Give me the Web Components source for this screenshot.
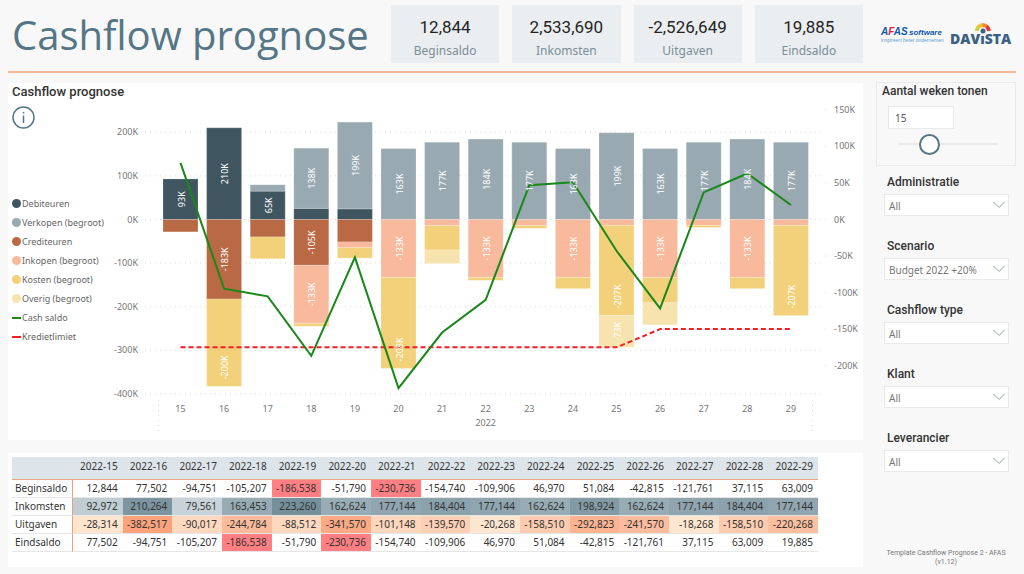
<!DOCTYPE html>
<html lang="nl">
<head>
<meta charset="utf-8">
<meta name="viewport" content="width=device-width, initial-scale=1">
<title>Cashflow prognose</title>
<style>
    body {
        margin: 0;
        background: #f8f8f8;
        color: #333;
        font-family: "Noto Sans", "Open Sans", sans-serif;
        --din: Roboto, "Liberation Sans", sans-serif;
        --teal: #547686;
        --peach: #fbb497;
    }
</style>
</head>
<body>
<cashflow-report></cashflow-report>

<script>
/*
*   Weekly figures behind the chart and the table, all amounts in euro.
*/
const WEEKS = [
    { week: 15, start: 12844, income: 92972, expense: -28314, end: 77502, up: { deb: 93 }, down: { cred: 28.3 } },
    { week: 16, start: 77502, income: 210264, expense: -382517, end: -94751, up: { deb: 210.3 }, down: { cred: 182.5, kosten: 200 } },
    { week: 17, start: -94751, income: 79561, expense: -90017, end: -105207, up: { deb: 65, verk: 14.6 }, down: { cred: 40, kosten: 50 } },
    { week: 18, start: -105207, income: 163453, expense: -244784, end: -186538, up: { deb: 25.5, verk: 138 }, down: { cred: 105, ink: 133, kosten: 6.8 } },
    { week: 19, start: -186538, income: 223260, expense: -88512, end: -51790, up: { deb: 24.3, verk: 199 }, down: { cred: 51.5, ink: 13, kosten: 24 } },
    { week: 20, start: -51790, income: 162624, expense: -341570, end: -230736, up: { verk: 162.6 }, down: { ink: 133, kosten: 208.4 } },
    { week: 21, start: -230736, income: 177144, expense: -101148, end: -154740, up: { verk: 177.1 }, down: { ink: 14, kosten: 56, overig: 31 } },
    { week: 22, start: -154740, income: 184404, expense: -139570, end: -109906, up: { verk: 184.4 }, down: { ink: 133, kosten: 6.5 } },
    { week: 23, start: -109906, income: 177144, expense: -20268, end: 46970, up: { verk: 177.1 }, down: { ink: 14, kosten: 6.3 } },
    { week: 24, start: 46970, income: 162624, expense: -158510, end: 51084, up: { verk: 162.6 }, down: { ink: 133, kosten: 25.5 } },
    { week: 25, start: 51084, income: 198924, expense: -292823, end: -42815, up: { verk: 198.9 }, down: { ink: 13.5, kosten: 206.5, overig: 73 } },
    { week: 26, start: -42815, income: 162624, expense: -241570, end: -121761, up: { verk: 162.6 }, down: { ink: 133, kosten: 58, overig: 50.5 } },
    { week: 27, start: -121761, income: 177144, expense: -18268, end: 37115, up: { verk: 177.1 }, down: { ink: 13.5, kosten: 4.8 } },
    { week: 28, start: 37115, income: 184404, expense: -158510, end: 63009, up: { verk: 184.4 }, down: { ink: 133, kosten: 25.5 } },
    { week: 29, start: 63009, income: 177144, expense: -220268, end: 19885, up: { verk: 177.1 }, down: { ink: 13.5, kosten: 206.8 } }
];

const SERIES = {
    deb: { name: "Debiteuren", color: "#3f5661" },
    verk: { name: "Verkopen (begroot)", color: "#98a9b2" },
    cred: { name: "Crediteuren", color: "#b96a44" },
    ink: { name: "Inkopen (begroot)", color: "#f9b99c" },
    kosten: { name: "Kosten (begroot)", color: "#f2d17a" },
    overig: { name: "Overig (begroot)", color: "#f7e3ae" },
    saldo: { name: "Cash saldo", color: "#1a871a", line: true },
    limiet: { name: "Kredietlimiet", color: "#f81d22", line: true }
};

class KpiCard extends HTMLElement {
    constructor() {
        super();
        this.attachShadow({ mode: "open" });

        this.shadowRoot.innerHTML = `
            <style>
                :host {
                    display: flex;
                    flex-direction: column;
                    align-items: center;
                    box-sizing: border-box;
                    height: 58px;
                    padding-top: 10px;
                    background: #eaeef1;
                }

                .value {
                    font: 400 17px/24px var(--din);
                    color: #252423;
                }

                .label {
                    font-size: 12px;
                    line-height: 24px;
                    color: #7b8d96;
                }
            </style>
            <div class="value"><slot></slot></div>
            <div class="label"><slot name="label"></slot></div>
        `;
    }
}

class PartnerLogos extends HTMLElement {
    constructor() {
        super();
        this.attachShadow({ mode: "open" });

        this.shadowRoot.innerHTML = `
            <style>
                :host {
                    display: flex;
                    gap: 7px;
                    padding: 15px 0 0 5px;
                }

                svg {
                    display: block;
                    overflow: visible;
                }
            </style>
            <svg width="62" height="30" viewBox="0 0 62 30" role="img" aria-label="AFAS software">
                <g font-family="Liberation Sans, sans-serif" font-style="italic" font-weight="700">
                    <text x="0" y="15" font-size="10" fill="#0d5aa7">A<tspan fill="#e2203c">F</tspan>AS</text>
                    <text x="28" y="15" font-size="8" fill="#0d5aa7">software</text>
                </g>
                <text x="0" y="22" font-family="Liberation Sans, sans-serif" font-size="5" fill="#5fa0d0">inspireert beter ondernemen</text>
            </svg>
            <svg width="62" height="30" viewBox="0 0 62 30" role="img" aria-label="DAVISTA">
                <g fill="none" stroke-width="4">
                    <path d="M27 11A6 6 0 0 1 29 6.500" stroke="#c8d43a"/>
                    <path d="M28.500 7A6 6 0 0 1 33 5" stroke="#f2c230"/>
                    <path d="M32.500 5A6 6 0 0 1 37 7" stroke="#f08a2c"/>
                    <path d="M36.500 6.500A6 6 0 0 1 39 11" stroke="#dc4038"/>
                </g>
                <circle cx="33" cy="11" r="2.500" fill="#3c5f86"/>
                <text x="0" y="24" font-family="Open Sans, sans-serif" font-weight="800" font-size="14" fill="#3c5f86">DAVıSTA</text>
            </svg>
        `;
    }
}

class ChartLegend extends HTMLElement {
    constructor() {
        super();
        this.attachShadow({ mode: "open" });

        const items = Object.values(SERIES).map(({ name, color, line }) => `
            <li><span class="${line ? "dash" : "dot"}" style="background:${color}"></span>${name}</li>
        `).join("");

        this.shadowRoot.innerHTML = `
            <style>
                :host {
                    display: block;
                }

                ul {
                    margin: 0;
                    padding: 0;
                    list-style: none;
                    font-size: 9px;
                    line-height: 19px;
                    color: #666;
                }

                li {
                    display: flex;
                    align-items: center;
                    gap: 1px;
                    white-space: nowrap;
                }

                .dot {
                    width: 9px;
                    height: 9px;
                    border-radius: 50%;
                }

                .dash {
                    width: 9px;
                    height: 2px;
                }
            </style>
            <ul>${items}</ul>
        `;
    }
}

class CashflowChart extends HTMLElement {
    constructor() {
        super();
        this.attachShadow({ mode: "open" });

        this.shadowRoot.innerHTML = `
            <style>
                :host {
                    display: block;
                }

                svg {
                    display: block;
                    width: 100%;
                    height: auto;
                }

                text {
                    font-size: 9px;
                    fill: #777;
                }

                .bar-label {
                    fill: #fff;
                    text-anchor: middle;
                }

                .end {
                    text-anchor: end;
                }

                .middle {
                    text-anchor: middle;
                }

                .grid {
                    stroke: #d9d9d9;
                    stroke-dasharray: 1 4;
                }

                .bar {
                    stroke: #fff;
                    stroke-opacity: 0.2;
                }
            </style>
            <svg viewBox="0 0 751 340" role="img" aria-label="Cashflow prognose per week">${this.draw()}</svg>
        `;
    }

    // centre of the bar of the nth week
    x(index) {
        return 68.5 + index * 43.6;
    }

    // left axis, in thousands
    bar(value) {
        return 119.5 - value * 0.4362;
    }

    // right axis, in thousands
    line(value) {
        return 119.5 - value * 0.7307;
    }

    draw() {
        return this.axes() + WEEKS.map((w, i) => this.stack(w.up, i, 1) + this.stack(w.down, i, -1)).join("")
            + this.lines() + this.labels.join("");
    }

    axes() {
        let out = "";
        for (let v = 200; v >= -400; v -= 100) {
            const y = this.bar(v);
            out += `<line class="grid" x1="33" x2="711" y1="${y}" y2="${y}"/>`;
            out += `<text class="end" x="26" y="${y + 3}">${v}K</text>`;
        }
        for (let v = 150; v >= -200; v -= 50) {
            const y = this.line(v);
            out += `<line class="grid" x1="713" x2="714" y1="${y}" y2="${y}"/>`;
            out += `<text x="722" y="${y + 3}">${v}K</text>`;
        }
        WEEKS.forEach((w, i) => {
            out += `<text class="middle" x="${this.x(i)}" y="312">${w.week}</text>`;
        });
        out += `<text class="middle" x="${this.x(7)}" y="326">2022</text>`;
        out += `<line class="grid" x1="46.500" x2="46.500" y1="300" y2="331"/>`;
        out += `<line class="grid" x1="700.500" x2="700.500" y1="300" y2="331"/>`;
        return out;
    }

    stack(parts, index, sign) {
        this.labels = this.labels || [];
        let total = 0;
        let out = "";
        for (const [key, size] of Object.entries(parts)) {
            const from = this.bar(sign * total);
            total += size;
            const to = this.bar(sign * total);
            const x = this.x(index);
            out += `<rect class="bar" x="${x - 17.5}" y="${Math.min(from, to)}" width="35" height="${Math.abs(to - from)}" fill="${SERIES[key].color}"/>`;

            // segments that are too short get no label
            if (size > 60) {
                const y = key === "kosten" ? to - 19 : (from + to) / 2;
                const text = (sign < 0 ? "-" : "") + Math.round(size) + "K";
                this.labels.push(`<text class="bar-label" transform="translate(${x + 4} ${y}) rotate(-90)">${text}</text>`);
            }
        }
        return out;
    }

    lines() {
        const saldo = WEEKS.map((w, i) => `${this.x(i)},${this.line(w.end / 1000)}`).join(" ");
        const limit = WEEKS.map((w, i) => `${this.x(i)},${this.line(w.week > 25 ? -150 : -175)}`).join(" ");
        return `
            <polyline points="${limit}" fill="none" stroke="${SERIES.limiet.color}" stroke-width="2" stroke-dasharray="5 3"/>
            <polyline points="${saldo}" fill="none" stroke="${SERIES.saldo.color}" stroke-width="2"/>
        `;
    }
}

class WeekTable extends HTMLElement {
    constructor() {
        super();
        this.attachShadow({ mode: "open" });

        const head = WEEKS.map(w => `<th scope="col">2022-${w.week}</th>`).join("");

        this.shadowRoot.innerHTML = `
            <style>
                :host {
                    display: block;
                    box-sizing: border-box;
                    padding: 4px 45px 15px 4px;
                    background: #fff;
                }

                table {
                    width: 100%;
                    table-layout: fixed;
                    border-collapse: separate;
                    border-spacing: 0;
                    font-size: 10px;
                    line-height: 17px;
                    color: #333;
                }

                th, td {
                    box-sizing: border-box;
                    padding: 0 5px 0 0;
                    font-weight: 400;
                    text-align: right;
                    white-space: nowrap;
                    border-bottom: 1px solid #e6e6e6;
                }

                thead th, thead td {
                    height: 23px;
                    padding-bottom: 4px;
                    background: #dee5ea;
                    border-bottom: 1px solid #e9a27e;
                }

                tr > :first-child {
                    width: 61px;
                    padding: 0 0 0 3px;
                    text-align: left;
                }

                tbody th {
                    border-right: 1px solid #e9a27e;
                }

                .low {
                    background: #ff7f83;
                }
            </style>
            <table>
                <thead><tr><td></td>${head}</tr></thead>
                <tbody>
                    ${this.row("Beginsaldo", "start", this.lowStyle)}
                    ${this.row("Inkomsten", "income", v => this.shade((v - 79561) / 143699, [200, 211, 217], [117, 143, 155]))}
                    ${this.row("Uitgaven", "expense", v => this.shade((-v - 18268) / 364249, [255, 230, 208], [250, 162, 124]))}
                    ${this.row("Eindsaldo", "end", this.lowStyle)}
                </tbody>
            </table>
        `;
    }

    row(name, key, style) {
        const cells = WEEKS.map(w => `<td ${style(w[key])}>${w[key].toLocaleString("en-US")}</td>`).join("");
        return `<tr><th scope="row">${name}</th>${cells}</tr>`;
    }

    // below the credit limit
    lowStyle(value) {
        return value < -175000 ? 'class="low"' : "";
    }

    shade(part, from, to) {
        const rgb = from.map((c, i) => Math.round(c + (to[i] - c) * part));
        return `style="background:rgb(${rgb})"`;
    }
}

class WeekSlider extends HTMLElement {
    constructor() {
        super();
        this.attachShadow({ mode: "open" });

        this.shadowRoot.innerHTML = `
            <style>
                :host {
                    display: flex;
                    flex-direction: column;
                    align-items: flex-start;
                    box-sizing: border-box;
                    height: 84px;
                    padding: 0 18px 0 5px;
                    border: 1px solid #e9e9e9;
                }

                label {
                    font: 500 12px/16px var(--din);
                    white-space: nowrap;
                }

                .number {
                    box-sizing: border-box;
                    width: 66px;
                    height: 23px;
                    margin: 7px 0 4px 6px;
                    padding: 0 6px;
                    border: 1px solid #e9e9e9;
                    background: #fff;
                    font: 10px/20px "Noto Sans", sans-serif;
                    color: #555;
                }

                .range {
                    appearance: none;
                    align-self: stretch;
                    height: 22px;
                    margin: 0 0 0 16px;
                    background: linear-gradient(#e9e9e9, #e9e9e9) center / 100% 2px no-repeat;
                }

                .range::-webkit-slider-thumb {
                    appearance: none;
                    box-sizing: border-box;
                    width: 21px;
                    height: 21px;
                    border: 2px solid var(--teal);
                    border-radius: 50%;
                    background: #fff;
                }
            </style>
            <label for="weeks">Aantal weken tonen</label>
            <input class="number" id="weeks" type="text" inputmode="numeric" value="15">
            <input class="range" type="range" min="1" max="53" value="15" aria-label="Aantal weken tonen">
        `;

        const [number, range] = this.shadowRoot.querySelectorAll("input");
        range.addEventListener("input", () => number.value = range.value);
        number.addEventListener("change", () => range.value = number.value);
    }
}

class FilterSelect extends HTMLElement {
    constructor() {
        super();
        this.attachShadow({ mode: "open" });

        this.shadowRoot.innerHTML = `
            <style>
                :host {
                    display: block;
                    padding: 0 7px 0 8px;
                }

                label {
                    display: block;
                    padding: 0 0 2px 3px;
                    font: 500 12px/20px var(--din);
                }

                .box {
                    display: grid;
                    align-items: center;
                    border: 1px solid #e9e9e9;
                    background: #fff;
                }

                .box > * {
                    grid-area: 1 / 1;
                }

                select {
                    appearance: none;
                    width: 100%;
                    height: 20px;
                    padding: 1px 20px 0 4px;
                    border: 0;
                    background: none;
                    font: 10px/16px "Noto Sans", sans-serif;
                    color: #777;
                }

                svg {
                    justify-self: end;
                    margin-right: 3px;
                    pointer-events: none;
                }
            </style>
            <label for="choice">${this.getAttribute("label")}</label>
            <div class="box">
                <select id="choice"><option>${this.getAttribute("value")}</option></select>
                <svg width="12" height="8" viewBox="0 0 12 8" fill="none" stroke="#8d9fa5"><path d="M.5 1l5.500 5.500L11.500 1"/></svg>
            </div>
        `;
    }
}

class CashflowReport extends HTMLElement {
    constructor() {
        super();
        this.attachShadow({ mode: "open" });

        this.shadowRoot.innerHTML = `
            <style>
                :host {
                    display: block;
                }

                .page {
                    display: flex;
                    flex-direction: column;
                    box-sizing: border-box;
                    min-height: 100vh;
                    padding: 5px 8px 7px;
                }

                .columns {
                    display: grid;
                    grid-template-columns: minmax(0, 1fr) 140px;
                    column-gap: 13px;
                }

                header {
                    height: 66px;
                    border-bottom: 2px solid var(--peach);
                }

                .banner {
                    display: flex;
                }

                h1 {
                    flex: 0 0 379px;
                    margin: 0;
                    padding-left: 4px;
                    font: 400 40px/60px "Open Sans", "Noto Sans", sans-serif;
                    color: var(--teal);
                    white-space: nowrap;
                }

                .kpis {
                    flex: 1;
                    display: grid;
                    grid-template-columns: repeat(4, 1fr);
                    gap: 13px;
                }

                .body {
                    flex: 1;
                    padding-top: 9px;
                }

                main {
                    display: flex;
                    flex-direction: column;
                    gap: 13px;
                    padding-top: 1px;
                }

                .chart {
                    display: grid;
                    grid-template-columns: 100px minmax(0, 1fr);
                    grid-template-rows: 17px auto;
                    padding-left: 4px;
                    background: #fff;
                }

                h2 {
                    grid-column: 1 / 3;
                    margin: 0;
                    font: 500 13px/17px var(--din);
                }

                .info, chart-legend {
                    grid-area: 2 / 1;
                }

                .info {
                    width: 23px;
                    height: 23px;
                    margin-top: 6px;
                    padding: 0;
                    border: 0;
                    background: none;
                }

                .info svg {
                    display: block;
                }

                chart-legend {
                    align-self: center;
                    justify-self: start;
                }

                aside {
                    display: flex;
                    flex-direction: column;
                }

                .filters {
                    display: flex;
                    flex-direction: column;
                    gap: 20px;
                    padding-top: 6px;
                }

                footer {
                    margin-top: auto;
                    font: 7px/9px var(--din);
                    color: #777;
                    text-align: center;
                }
            </style>
            <div class="page">
                <header class="columns">
                    <div class="banner">
                        <h1>Cashflow prognose</h1>
                        <div class="kpis">
                            <kpi-card>12,844<span slot="label">Beginsaldo</span></kpi-card>
                            <kpi-card>2,533,690<span slot="label">Inkomsten</span></kpi-card>
                            <kpi-card>-2,526,649<span slot="label">Uitgaven</span></kpi-card>
                            <kpi-card>19,885<span slot="label">Eindsaldo</span></kpi-card>
                        </div>
                    </div>
                    <partner-logos></partner-logos>
                </header>
                <div class="columns body">
                    <main>
                        <section class="chart">
                            <h2>Cashflow prognose</h2>
                            <button class="info" type="button" aria-label="Informatie">
                                <svg width="23" height="23" viewBox="0 0 23 23" fill="none" stroke="#547686">
                                    <circle cx="11.500" cy="11.500" r="10.500" stroke-width="1.500"/>
                                    <path d="M11.500 9.500v7.500M11.500 6v1.500" stroke-width="1.500"/>
                                </svg>
                            </button>
                            <chart-legend></chart-legend>
                            <cashflow-chart></cashflow-chart>
                        </section>
                        <week-table></week-table>
                    </main>
                    <aside>
                        <week-slider></week-slider>
                        <div class="filters">
                            <filter-select label="Administratie" value="All"></filter-select>
                            <filter-select label="Scenario" value="Budget 2022 +20%"></filter-select>
                            <filter-select label="Cashflow type" value="All"></filter-select>
                            <filter-select label="Klant" value="All"></filter-select>
                            <filter-select label="Leverancier" value="All"></filter-select>
                        </div>
                        <footer>Template Cashflow Prognose 2 - AFAS<br>(v1.12)</footer>
                    </aside>
                </div>
            </div>
        `;
    }
}

customElements.define("kpi-card", KpiCard);
customElements.define("partner-logos", PartnerLogos);
customElements.define("chart-legend", ChartLegend);
customElements.define("cashflow-chart", CashflowChart);
customElements.define("week-table", WeekTable);
customElements.define("week-slider", WeekSlider);
customElements.define("filter-select", FilterSelect);
customElements.define("cashflow-report", CashflowReport);
</script>
</body>
</html>
